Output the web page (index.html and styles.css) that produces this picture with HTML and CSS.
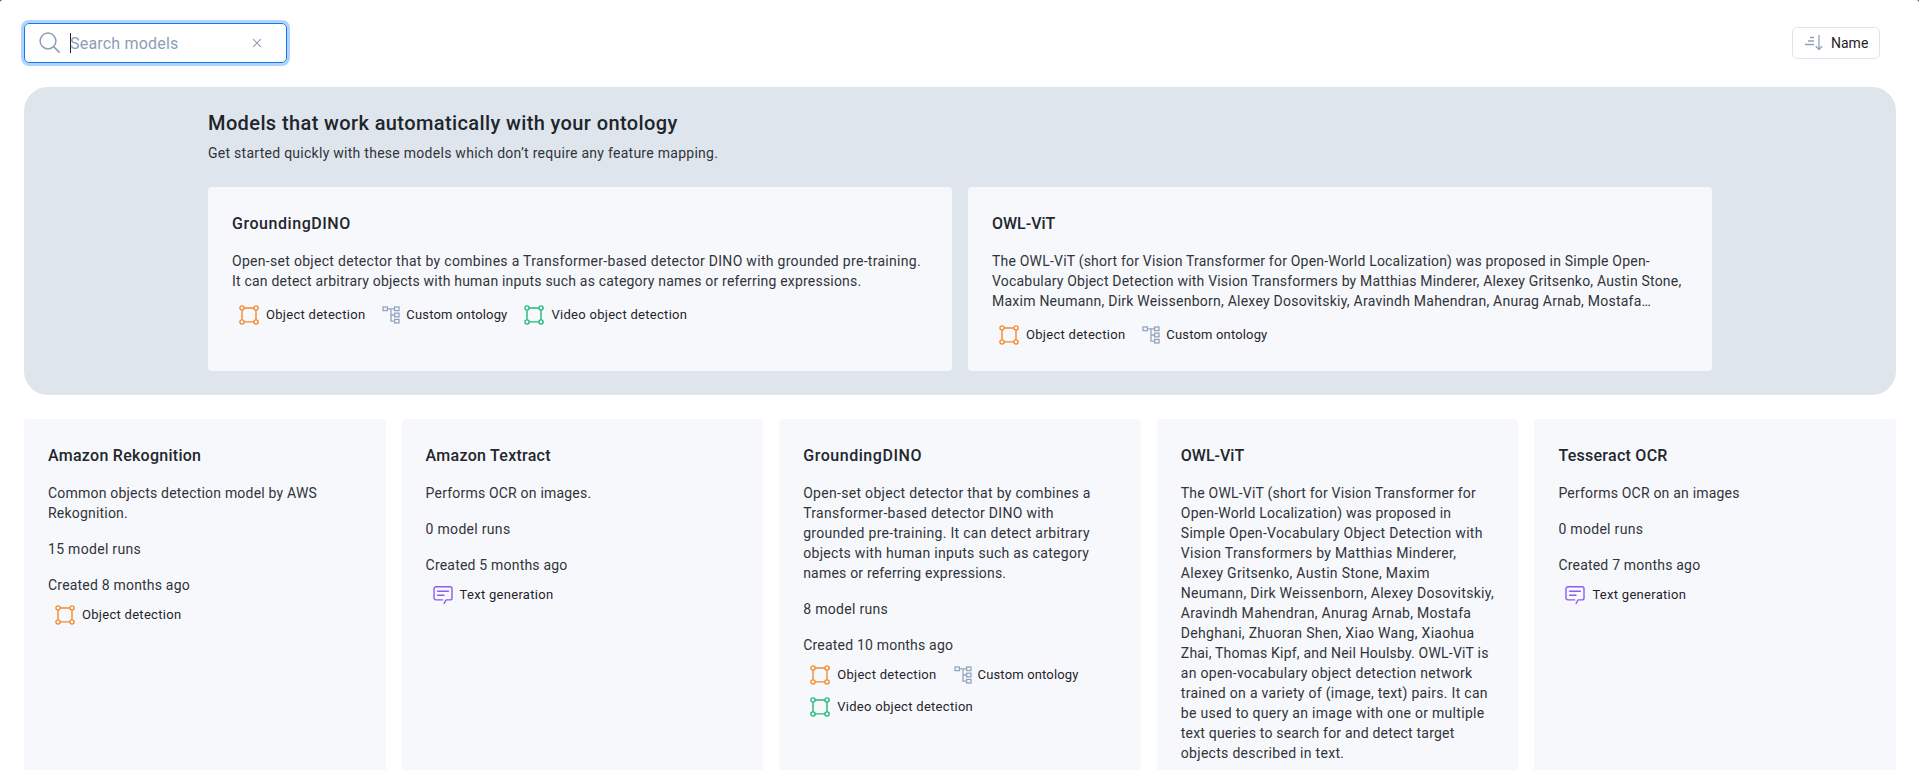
FILE: index.html
```
<!DOCTYPE html>
<html lang="en">
  <head>
    <meta charset="UTF-8" />
    <meta name="viewport" content="width=device-width, initial-scale=1.0" />
    <title>Models</title>
    <link rel="stylesheet" href="styles.css">
  </head>
  <body>
    <!-- icons used by the tags -->
    <svg class="sprite" width="0" height="0">
      <symbol id="box" viewBox="0 0 20 20">
        <g fill="none" stroke="currentColor" stroke-width="1.4">
          <path d="M5.2 3h9.6M5.2 16.9h9.6M3 5.2v9.5M17 5.2v9.5" />
          <circle cx="3" cy="3" r="2.1" />
          <circle cx="17" cy="3" r="2.1" />
          <circle cx="3" cy="17" r="2.1" />
          <circle cx="17" cy="17" r="2.1" />
        </g>
      </symbol>
      <symbol id="tree" viewBox="0 0 18 20">
        <g fill="none" stroke="currentColor" stroke-width="1.3">
          <rect x="1" y="2" width="4.4" height="3.6" />
          <rect x="12.6" y="2" width="4.4" height="3.6" />
          <rect x="12.6" y="8.2" width="4.4" height="3.6" />
          <rect x="12.6" y="14.4" width="4.4" height="3.6" />
          <path d="M5.4 3.8h7.2M9 3.8v12.4h3.6M9 10h3.6" />
        </g>
      </symbol>
      <symbol id="text" viewBox="0 0 20 20">
        <g fill="none" stroke="currentColor" stroke-width="1.4" stroke-linecap="round" stroke-linejoin="round">
          <path d="M9.6 14.9H3a2 2 0 0 1-2-2V3.8a2 2 0 0 1 2-2h14a2 2 0 0 1 2 2v9.1a2 2 0 0 1-2 2h-3.8l-2.1 3.4" />
          <path d="M4.6 6.3h10.8M4.6 10.3h6.4" />
        </g>
      </symbol>
    </svg>

    <div class="page">
      <div class="topbar">
        <div class="search">
          <svg class="search-icon" width="22" height="22" viewBox="0 0 22 22" fill="none" stroke="currentColor" stroke-width="1.5">
            <circle cx="9" cy="9" r="7.9" />
            <path d="M14.6 14.6l6 6" />
          </svg>
          <span class="caret"></span>
          <span class="placeholder">Search models</span>
          <svg class="clear" width="10" height="10" viewBox="0 0 10 10" fill="none" stroke="currentColor" stroke-width="1.1">
            <path d="M1.2 1.2l7.6 7.6M8.8 1.2L1.2 8.8" />
          </svg>
        </div>
        <button class="sort">
          <svg width="18" height="16" viewBox="0 0 18 16" fill="none" stroke="currentColor" stroke-width="1.3">
            <path d="M5 2.5h4M3 6h6M0 9.5h9" />
            <path d="M14 0v14.4M10.8 11.3l3.2 3.2 3.2-3.2" />
          </svg>
          <span>Name</span>
        </button>
      </div>

      <div class="featured">
        <div class="inner">
          <h2>Models that work automatically with your ontology</h2>
          <p class="subtitle">Get started quickly with these models which don’t require any feature mapping.</p>
          <div class="featured-cards">
            <div class="card">
              <h3 class="dino">GroundingDINO</h3>
              <p class="desc">Open-set object detector that by combines a Transformer-based detector DINO with grounded pre-training.<br><span class="tight">It can detect arbitrary objects with human inputs such as category names or referring expressions.</span></p>
              <div class="tags">
                <span class="tag"><svg class="orange" width="20" height="20"><use href="#box" /></svg>Object detection</span>
                <span class="tag custom"><svg class="grey" width="18" height="20"><use href="#tree" /></svg>Custom ontology</span>
                <span class="tag"><svg class="green" width="20" height="20"><use href="#box" /></svg>Video object detection</span>
              </div>
            </div>
            <div class="card">
              <h3 class="owl">OWL-ViT</h3>
              <p class="desc tight">The OWL-ViT (short for Vision Transformer for Open-World Localization) was proposed in Simple Open-<br>Vocabulary Object Detection with Vision Transformers by Matthias Minderer, Alexey Gritsenko, Austin Stone,<br><span class="loose">Maxim Neumann, Dirk Weissenborn, Alexey Dosovitskiy, Aravindh Mahendran, Anurag Arnab, Mostafa…</span></p>
              <div class="tags">
                <span class="tag"><svg class="orange" width="20" height="20"><use href="#box" /></svg>Object detection</span>
                <span class="tag custom"><svg class="grey" width="18" height="20"><use href="#tree" /></svg>Custom ontology</span>
              </div>
            </div>
          </div>
        </div>
      </div>

      <div class="models">
        <div class="card">
          <h3>Amazon Rekognition</h3>
          <p class="desc tight">Common objects detection model by AWS<br>Rekognition.</p>
          <p>15 model runs</p>
          <p class="tight">Created 8 months ago</p>
          <div class="tags">
            <span class="tag"><svg class="orange" width="20" height="20"><use href="#box" /></svg>Object detection</span>
          </div>
        </div>
        <div class="card">
          <h3>Amazon Textract</h3>
          <p class="desc tight">Performs OCR on images.</p>
          <p>0 model runs</p>
          <p class="tight">Created 5 months ago</p>
          <div class="tags">
            <span class="tag"><svg class="purple" width="20" height="20"><use href="#text" /></svg>Text generation</span>
          </div>
        </div>
        <div class="card">
          <h3 class="dino">GroundingDINO</h3>
          <p class="desc">Open-set object detector that by combines a<br>Transformer-based detector DINO with<br>grounded pre-training. It can detect arbitrary<br>objects with human inputs such as category<br><span class="tight">names or referring expressions.</span></p>
          <p>8 model runs</p>
          <p class="tight">Created 10 months ago</p>
          <div class="tags">
            <span class="tag"><svg class="orange" width="20" height="20"><use href="#box" /></svg>Object detection</span>
            <span class="tag custom"><svg class="grey" width="18" height="20"><use href="#tree" /></svg>Custom ontology</span>
            <span class="tag"><svg class="green" width="20" height="20"><use href="#box" /></svg>Video object detection</span>
          </div>
        </div>
        <div class="card">
          <h3 class="owl">OWL-ViT</h3>
          <p class="desc"><span class="tight">The OWL-ViT (short for Vision Transformer for<br>Open-World Localization) was proposed in</span><br>Simple Open-Vocabulary Object Detection with<br>Vision Transformers by Matthias Minderer,<br>Alexey Gritsenko, Austin Stone, Maxim<br>Neumann, Dirk Weissenborn, Alexey Dosovitskiy,<br>Aravindh Mahendran, Anurag Arnab, Mostafa<br>Dehghani, Zhuoran Shen, Xiao Wang, Xiaohua<br><span class="tight">Zhai, Thomas Kipf, and Neil Houlsby. OWL-ViT is</span><br>an open-vocabulary object detection network<br>trained on a variety of (image, text) pairs. It can<br>be used to query an image with one or multiple<br><span class="tight">text queries to search for and detect target</span><br>objects described in text.</p>
        </div>
        <div class="card">
          <h3>Tesseract OCR</h3>
          <p class="desc tight">Performs OCR on an images</p>
          <p>0 model runs</p>
          <p class="tight">Created 7 months ago</p>
          <div class="tags">
            <span class="tag"><svg class="purple" width="20" height="20"><use href="#text" /></svg>Text generation</span>
          </div>
        </div>
      </div>
    </div>
  </body>
</html>
```
FILE: styles.css
```
* {
  box-sizing: border-box;
}
html {
  background-color: #55585c;
}
body {
  margin: 0;
  height: 100vh;
  overflow: hidden;
  font-family: Roboto, "Liberation Sans", sans-serif;
  font-size: 14px;
  line-height: 20px;
  letter-spacing: 0.3px;
  color: #30343a;
}
h2,
h3,
p {
  margin: 0;
  white-space: nowrap;
}
.sprite {
  display: block;
}
.page {
  height: 100vh;
  overflow: hidden;
  padding: 23px 23px 0 24px;
  background-color: #fff;
  border-radius: 3px 3px 0 0;
}
.topbar {
  display: flex;
  justify-content: space-between;
  align-items: center;
  height: 40px;
  padding-right: 16px;
}
.search {
  display: flex;
  align-items: center;
  width: 263px;
  height: 40px;
  padding: 0 24px 0 14px;
  border: 1px solid #0d7bf7;
  border-radius: 5px;
  box-shadow: 0 0 0 3px #b0d4fc;
  color: #8c9db8;
}
.caret {
  width: 1px;
  height: 20px;
  margin-left: 9px;
  background-color: #1c2127;
}
.placeholder {
  margin-left: -1px;
  padding-top: 1px;
  font-size: 16px;
  letter-spacing: 0.2px;
}
.clear {
  margin-left: auto;
}
.sort {
  display: flex;
  align-items: center;
  gap: 8px;
  width: 88px;
  height: 32px;
  padding: 0 0 0 12px;
  border: 1px solid #dfe5ee;
  border-radius: 5px;
  background-color: #fff;
  color: #8fa2bd;
  font-family: inherit;
  font-size: 14px;
}
.sort span {
  color: #1f242a;
}
.featured {
  height: 308px;
  margin-top: 24px;
  padding: 24px 184px 24px 184px;
  border-radius: 24px;
  background-color: #dfe5ed;
}
h2 {
  font-size: 20px;
  line-height: 24px;
  font-weight: 500;
  letter-spacing: 0.39px;
  color: #20252b;
}
.subtitle {
  margin-top: 8px;
  letter-spacing: 0.27px;
}
.featured-cards {
  display: grid;
  grid-template-columns: 1fr 1fr;
  gap: 16px;
  width: 1504px;
  height: 184px;
  margin-top: 24px;
}
.models {
  display: grid;
  grid-template-columns: repeat(5, 1fr);
  gap: 16px;
  height: 400px;
  margin-top: 24px;
}
.card {
  display: flex;
  flex-direction: column;
  gap: 16px;
  min-width: 0;
  padding: 24px;
  border-radius: 4px;
  background-color: #f7f8fc;
}
h3 {
  height: 24px;
  padding-top: 1px;
  font-size: 16px;
  line-height: 24px;
  font-weight: 500;
  letter-spacing: 0.27px;
  color: #22272d;
}
h3.dino {
  letter-spacing: 0.55px;
}
h3.owl {
  letter-spacing: 0;
}
.tight {
  letter-spacing: 0.2px;
}
.loose {
  letter-spacing: 0.24px;
}
.tags {
  display: flex;
  flex-wrap: wrap;
  gap: 8px 17px;
  margin-top: -8px;
  padding-left: 7px;
}
.featured-cards .tags {
  margin-top: -4px;
}
.tag {
  display: flex;
  align-items: center;
  gap: 7px;
  height: 24px;
  font-size: 13px;
  letter-spacing: 0.29px;
  color: #1f242a;
  white-space: nowrap;
}
.custom {
  gap: 6px;
  letter-spacing: 0.16px;
}
.orange {
  color: #f28a2e;
}
.green {
  color: #22b878;
}
.grey {
  color: #93a5be;
}
.purple {
  color: #8b5cf0;
}
```
